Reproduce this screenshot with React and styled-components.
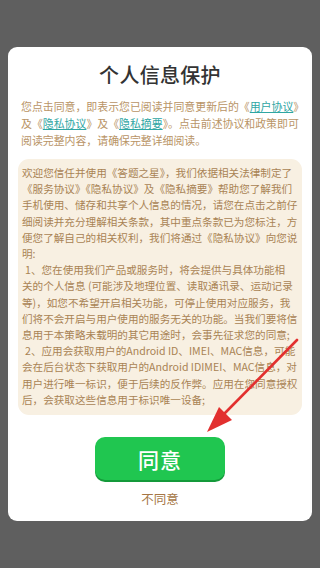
import React from "react";
import styled, { createGlobalStyle } from "styled-components";

const Global = createGlobalStyle`
  html, body { margin: 0; padding: 0; background: #5f5f5f; }
  body { font-family: "Noto Sans CJK SC", "Noto Sans", sans-serif; }
`;

const Page = styled.div`
  width: 320px;
  height: 568px;
  display: flex;
  align-items: center;
  justify-content: center;
  background: #5f5f5f;
`;

const Dialog = styled.div`
  position: relative;
  width: 304px;
  box-sizing: border-box;
  background: #ffffff;
  border-radius: 9px;
  padding: 14px 10px 13px;
  display: flex;
  flex-direction: column;
  align-items: center;
`;

const Title = styled.h1`
  margin: 0;
  font-size: 20px;
  line-height: 28px;
  font-weight: 500;
  color: #333333;
  letter-spacing: 0.3px;
`;

const Intro = styled.div`
  align-self: stretch;
  margin: 9.5px 0 0;
  padding: 0 3px;
`;

const IntroLine = styled.div`
  font-size: 10.9px;
  line-height: 17px;
  color: #b99466;
  white-space: nowrap;
`;

const Link = styled.span`
  color: #2fa6a3;
  text-decoration: underline;
  text-underline-offset: 1px;
`;

const Terms = styled.div`
  align-self: stretch;
  margin-top: 9.5px;
  background: #f8f0e2;
  border-radius: 11px;
  padding: 6px 4px 7px;
`;

const Line = styled.div`
  font-size: 10.6px;
  line-height: 16.2px;
  color: #a98354;
  white-space: nowrap;
  padding-left: ${(p) => (p.$indent ? "3px" : "0")};
`;

const AgreeButton = styled.button`
  margin-top: 22px;
  width: 130px;
  height: 43px;
  border: none;
  border-radius: 10px;
  background: #20c650;
  box-shadow: 0 2px 0 #149a3a;
  color: #ffffff;
  font-family: "Noto Sans CJK SC", sans-serif;
  font-size: 21px;
  font-weight: 500;
  letter-spacing: 1px;
  display: flex;
  align-items: center;
  justify-content: center;
  padding: 0;
`;

const Decline = styled.div`
  margin-top: 10px;
  font-size: 12.5px;
  line-height: 18px;
  color: #a57645;
`;

const Arrow = styled.svg`
  position: absolute;
  left: 0;
  top: 0;
  width: 304px;
  height: 472px;
  pointer-events: none;
`;

const lines = [
  { t: "欢迎您信任并使用《答题之星》，我们依据相关法律制定了" },
  { t: "《服务协议》《隐私协议》及《隐私摘要》帮助您了解我们" },
  { t: "手机使用、储存和共享个人信息的情况，请您在点击之前仔" },
  { t: "细阅读并充分理解相关条款，其中重点条款已为您标注，方" },
  { t: "便您了解自己的相关权利，我们将通过《隐私协议》向您说" },
  { t: "明:" },
  { t: "1、您在使用我们产品或服务时，将会提供与具体功能相", indent: true },
  { t: "关的个人信息 (可能涉及地理位置、读取通讯录、运动记录" },
  { t: "等)，如您不希望开启相关功能，可停止使用对应服务，我" },
  { t: "们将不会开启与用户使用的服务无关的功能。当我们要将信" },
  { t: "息用于本策略未载明的其它用途时，会事先征求您的同意;" },
  { t: "2、应用会获取用户的Android ID、IMEI、MAC信息，可能", indent: true },
  { t: "会在后台状态下获取用户的Android IDIMEI、MAC信息，对" },
  { t: "用户进行唯一标识，便于后续的反作弊。应用在您同意授权" },
  { t: "后，会获取这些信息用于标识唯一设备;" },
];

export default function App() {
  return (
    <>
      <Global />
      <Page>
        <Dialog>
          <Title>个人信息保护</Title>
          <Intro>
            <IntroLine>
              您点击同意，即表示您已阅读并同意更新后的《<Link>用户协议</Link>》
            </IntroLine>
            <IntroLine>
              及《<Link>隐私协议</Link>》及《<Link>隐私摘要</Link>》。点击前述协议和政策即可
            </IntroLine>
            <IntroLine>阅读完整内容，请确保完整详细阅读。</IntroLine>
          </Intro>
          <Terms>
            {lines.map((l, i) => (
              <Line key={i} $indent={l.indent}>
                {l.t}
              </Line>
            ))}
          </Terms>
          <AgreeButton>同意</AgreeButton>
          <Decline>不同意</Decline>
          <Arrow viewBox="0 0 304 472">
            <line x1="289" y1="293" x2="216" y2="367" stroke="#e2302f" strokeWidth="2.6" strokeLinecap="round" />
            <polygon points="199,385 224,373 211,360" fill="#e2302f" />
          </Arrow>
        </Dialog>
      </Page>
    </>
  );
}
